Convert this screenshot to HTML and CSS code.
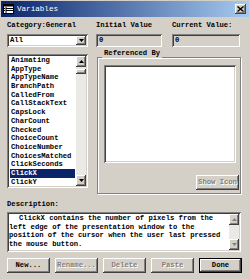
FILE: index.html
```html
<!DOCTYPE html>
<html>
<head>
<meta charset="utf-8">
<link rel="stylesheet" href="styles.css">
</head>
<body>
<div class="window">
  <div class="titlebar">
    <svg class="ticon" width="11" height="10" viewBox="0 0 11 10">
      <rect x="0.5" y="0.5" width="10" height="9" fill="#fff" stroke="#000"/>
      <rect x="0.5" y="0.5" width="10" height="2" fill="#000"/>
      <line x1="3" y1="3" x2="3" y2="9" stroke="#000"/>
      <line x1="3" y1="4.5" x2="10" y2="4.5" stroke="#000"/>
      <line x1="3" y1="6.5" x2="10" y2="6.5" stroke="#000"/>
      <line x1="1" y1="4.5" x2="2" y2="4.5" stroke="#000"/>
      <line x1="1" y1="6.5" x2="2" y2="6.5" stroke="#000"/>
    </svg>
    <span class="title">Variables</span>
    <span class="close">
      <svg width="7" height="6" viewBox="0 0 7 6"><path d="M0.5 0.5 L6.5 5.5 M6.5 0.5 L0.5 5.5" stroke="#000" stroke-width="1.4"/></svg>
    </span>
  </div>
  <div class="body">
    <div class="toprow">
      <div class="col c1">
        <div class="lbl">Category:General</div>
        <div class="combo sunken">
          <span class="ctext">All</span>
          <span class="sbtn raised"><svg width="5" height="3" viewBox="0 0 5 3"><polygon points="0,0 5,0 2.5,3" fill="#000"/></svg></span>
        </div>
      </div>
      <div class="col c2">
        <div class="lbl">Initial Value</div>
        <div class="field sunken">0</div>
      </div>
      <div class="col c3">
        <div class="lbl">Current Value:</div>
        <div class="field sunken">0</div>
      </div>
    </div>
    <div class="midrow">
      <div class="list sunken">
        <ul class="items">
          <li>Animating</li>
          <li>AppType</li>
          <li>AppTypeName</li>
          <li>BranchPath</li>
          <li>CalledFrom</li>
          <li>CallStackText</li>
          <li>CapsLock</li>
          <li>CharCount</li>
          <li>Checked</li>
          <li>ChoiceCount</li>
          <li>ChoiceNumber</li>
          <li>ChoicesMatched</li>
          <li>ClickSeconds</li>
          <li class="sel">ClickX</li>
          <li>ClickY</li>
        </ul>
        <div class="vscroll">
          <span class="sbtn raised"><svg width="5" height="3" viewBox="0 0 5 3"><polygon points="0,3 5,3 2.5,0" fill="#000"/></svg></span>
          <span class="track"><span class="thumb raised"></span></span>
          <span class="sbtn raised"><svg width="5" height="3" viewBox="0 0 5 3"><polygon points="0,0 5,0 2.5,3" fill="#000"/></svg></span>
        </div>
      </div>
      <fieldset class="group">
        <legend>Referenced By</legend>
        <div class="refbox sunken"></div>
        <div class="grow">
          <span class="btn raised dis showicon">Show Icon</span>
        </div>
      </fieldset>
    </div>
    <div class="lbl desclbl">Description:</div>
    <div class="descbox sunken">
      <div class="desctext">
        <div class="first">ClickX contains the number of pixels from the</div>
        <div>left edge of the presentation window to the</div>
        <div>position of the cursor when the user last pressed</div>
        <div>the mouse button.</div>
      </div>
      <div class="vscroll">
        <span class="sbtn raised"><svg width="5" height="3" viewBox="0 0 5 3"><polygon points="0,3 5,3 2.5,0" fill="#808080"/></svg></span>
        <span class="track"></span>
        <span class="sbtn raised"><svg width="5" height="3" viewBox="0 0 5 3"><polygon points="0,0 5,0 2.5,3" fill="#808080"/></svg></span>
      </div>
    </div>
    <div class="buttons">
      <span class="btn raised">New...</span>
      <span class="btn raised dis">Rename...</span>
      <span class="btn raised dis">Delete</span>
      <span class="btn raised dis">Paste</span>
      <span class="btn raised def">Done</span>
    </div>
  </div>
</div>
</body>
</html>
```
FILE: styles.css
```css
* { box-sizing: border-box; margin: 0; padding: 0; }
html, body { width: 250px; height: 279px; overflow: hidden; }
body {
  background: #d4d0c8;
  font-family: "Liberation Mono", "DejaVu Sans Mono", monospace;
  font-size: 7.2px;
  font-weight: bold;
  line-height: 9px;
  color: #000;
}
.window {
  width: 250px;
  height: 279px;
  background: #d4d0c8;
  padding: 1px 1px 0 1px;
  display: flex;
  flex-direction: column;
}
.titlebar {
  height: 16px;
  background: linear-gradient(to right, #0a246a, #a6caf0);
  display: flex;
  align-items: center;
  padding: 0 2px 0 2px;
}
.ticon { flex: none; display: block; }
.title {
  color: #fff;
  font-size: 7.6px;
  font-weight: normal;
  margin-left: 3px;
  flex: 1;
}
.close {
  width: 11px;
  height: 10px;
  background: #d4d0c8;
  box-shadow: inset -1px -1px #404040, inset 1px 1px #fff, inset -2px -2px #808080;
  display: flex;
  align-items: center;
  justify-content: center;
  margin-right: 1px;
}
.close svg { display: block; }

.raised {
  background: #d4d0c8;
  box-shadow: inset -1px -1px #404040, inset 1px 1px #fff, inset -2px -2px #808080, inset 2px 2px #d4d0c8;
}
.sunken {
  box-shadow: inset 1px 1px #808080, inset -1px -1px #fff, inset 2px 2px #404040, inset -2px -2px #d4d0c8;
  padding: 2px;
}

.body {
  flex: 1;
  padding: 4px 7px 0 6px;
  display: flex;
  flex-direction: column;
}
.toprow { display: flex; }
.c1 { width: 81px; }
.c2 { width: 66px; margin-left: 8px; }
.c3 { width: 68px; margin-left: 10px; }
.lbl { height: 9px; white-space: nowrap; }
.combo, .field { margin-top: 4px; height: 13px; display: flex; align-items: center; }
.combo { background: #fff; }
.ctext { flex: 1; padding-left: 1px; }
.combo .sbtn { height: 9px; width: 10px; }
.field { background: #d4d0c8; padding-left: 3px; }

.sbtn {
  display: flex;
  align-items: center;
  justify-content: center;
  flex: none;
  width: 10px;
  height: 11px;
}
.sbtn svg { display: block; }

.midrow { display: flex; margin-top: 2px; align-items: flex-start; }
.list {
  margin-top: 5px;
  width: 81px;
  height: 134px;
  background: #fff;
  display: flex;
}
.items {
  list-style: none;
  flex: 1;
  padding: 0 1px;
  overflow: hidden;
}
.items li {
  height: 8.7px;
  line-height: 8.7px;
  padding-left: 1px;
  white-space: nowrap;
}
.items li.sel { background: #0a246a; color: #fff; }
.vscroll {
  width: 10px;
  display: flex;
  flex-direction: column;
  background: #ebe9e5;
}
.track { flex: 1; display: block; }
.thumb { display: block; height: 5px; margin-top: 2px; }

.group {
  margin-left: 9px;
  width: 144px;
  height: 145px;
  border: 1px solid #808080;
  box-shadow: inset 1px 1px #fff, 1px 1px #fff;
  padding: 0 1px 2px 6px;
  min-inline-size: 0;
}
.group legend {
  padding: 0 2px 7px 2px;
  margin-left: -2px;
  line-height: 9px;
  height: 16px;
}
.refbox { background: #fff; width: 132px; height: 98px; }
.grow { display: flex; justify-content: flex-end; margin-top: 12px; }
.showicon { width: 56px; height: 14px; }

.desclbl { margin-top: 6px; }
.descbox {
  margin-top: 3px;
  width: 234px;
  height: 40px;
  background: #fff;
  display: flex;
}
.desctext {
  flex: 1;
  white-space: nowrap;
  line-height: 8.5px;
  overflow: hidden;
}
.desctext .first { text-indent: 10px; }

.buttons {
  margin-top: 6px;
  display: flex;
  justify-content: space-between;
  width: 235px;
}
.btn {
  width: 43px;
  height: 15px;
  display: flex;
  align-items: center;
  justify-content: center;
  white-space: nowrap;
}
.dis { color: #808080; text-shadow: 1px 1px #fff; }
.def {
  box-shadow: inset 0 0 0 1px #000, inset -2px -2px #404040, inset 2px 2px #fff, inset -3px -3px #808080;
}
```
